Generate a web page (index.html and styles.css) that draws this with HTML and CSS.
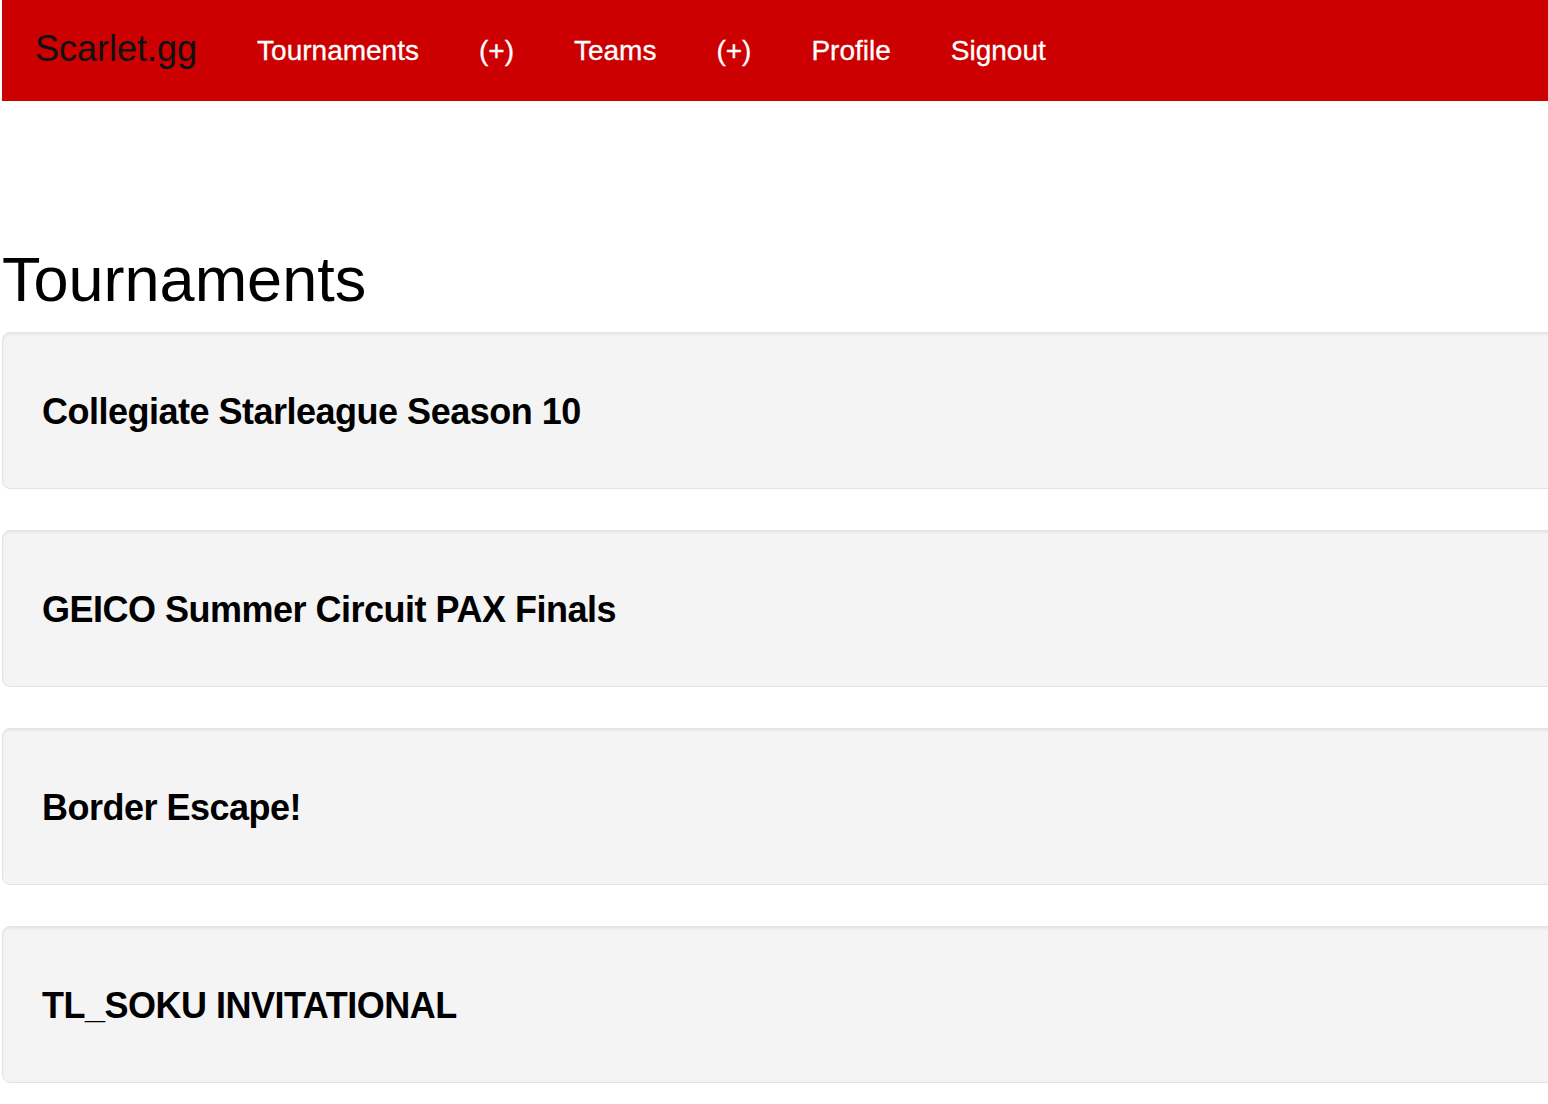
FILE: index.html
```html
<!DOCTYPE html>
<html lang="en">
<head>
<meta charset="utf-8">
<title>Scarlet.gg</title>
<link rel="stylesheet" href="styles.css">
</head>
<body>
<div class="page">
  <nav class="navbar">
    <a class="brand" href="#">Scarlet.gg</a>
    <ul class="nav">
      <li><a href="#">Tournaments</a></li>
      <li><a href="#">(+)</a></li>
      <li><a href="#">Teams</a></li>
      <li><a href="#">(+)</a></li>
      <li><a href="#">Profile</a></li>
      <li><a href="#">Signout</a></li>
    </ul>
  </nav>
  <main class="content">
    <h1 class="title">Tournaments</h1>
    <div class="well"><h3 class="well-title">Collegiate Starleague Season 10</h3></div>
    <div class="well"><h3 class="well-title">GEICO Summer Circuit PAX Finals</h3></div>
    <div class="well"><h3 class="well-title">Border Escape!</h3></div>
    <div class="well"><h3 class="well-title">TL_SOKU INVITATIONAL</h3></div>
  </main>
</div>
</body>
</html>
```

FILE: styles.css
```css
html, body {
  margin: 0;
  padding: 0;
  overflow-x: hidden;
  background: #fff;
}
body {
  font-family: "Liberation Sans", Arial, Helvetica, sans-serif;
  color: #000;
}
.page {
  padding-left: 2px;
  margin-right: -12px;
}
.navbar {
  display: flex;
  align-items: center;
  height: 101px;
  background: #cc0000;
  padding-left: 33px;
}
.brand {
  font-size: 36px;
  line-height: 36px;
  color: #111;
  text-decoration: none;
  padding-right: 30px;
  padding-bottom: 3px;
}
.nav {
  display: flex;
  list-style: none;
  margin: 0;
  padding: 0;
}
.nav a {
  display: block;
  padding: 0 30px;
  font-size: 28px;
  line-height: 28px;
  color: #fff;
  text-decoration: none;
  -webkit-text-stroke: 0.3px #fff;
}
.content {
  padding-top: 144px;
}
.title {
  margin: 0 0 19px 0;
  font-size: 63px;
  line-height: 68px;
  font-weight: normal;
}
.well {
  box-sizing: border-box;
  height: 157px;
  margin-bottom: 41px;
  display: flex;
  align-items: center;
  padding-left: 39px;
  padding-top: 2px;
  background: #f4f4f4;
  border: 1px solid #e3e3e3;
  border-radius: 8px;
  box-shadow: inset 0 2px 2px rgba(0, 0, 0, 0.05);
}
.well-title {
  margin: 0;
  font-size: 36px;
  line-height: 40px;
  font-weight: bold;
  letter-spacing: -0.5px;
  color: #000;
}
```
